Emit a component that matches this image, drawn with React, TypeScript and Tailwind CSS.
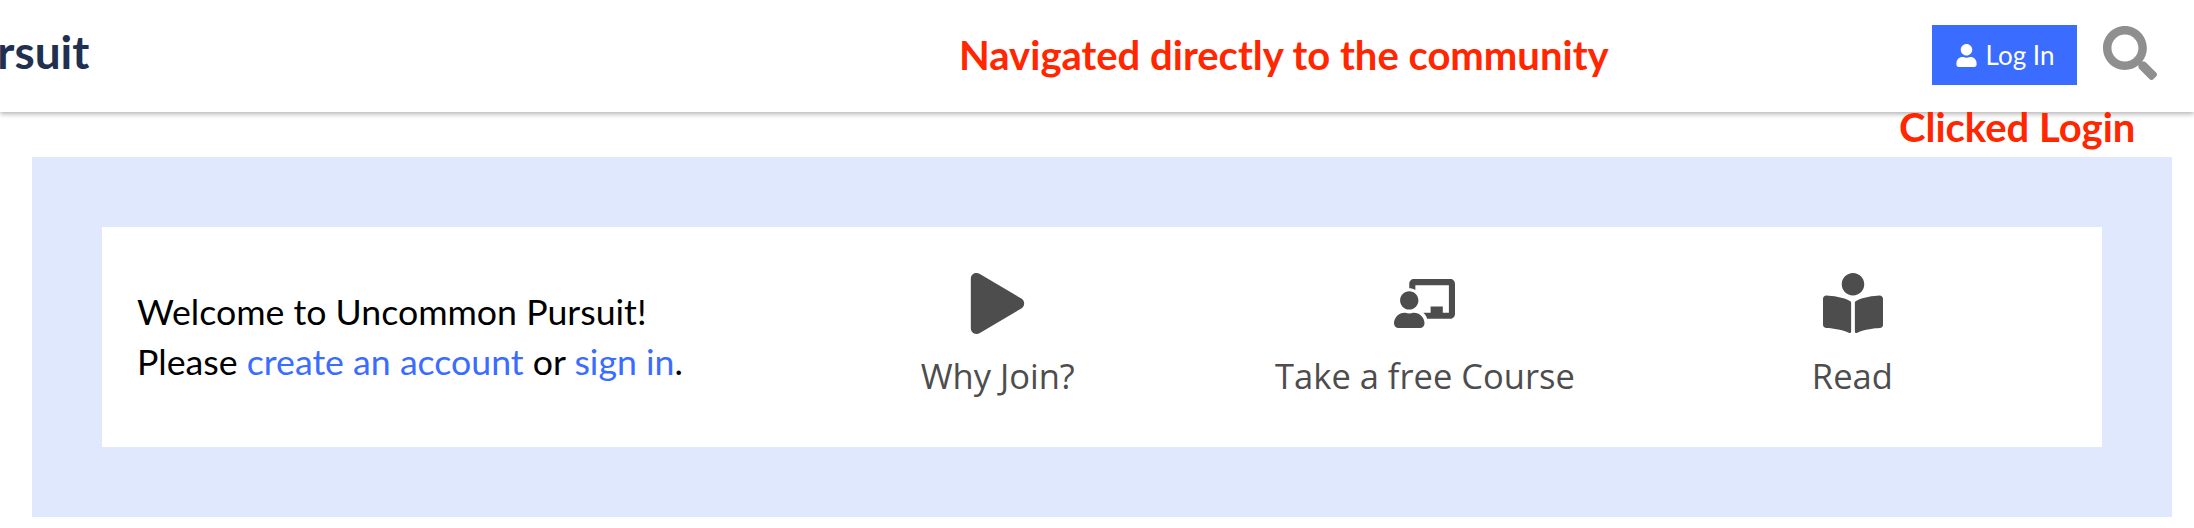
import { FaBookReader, FaChalkboardTeacher, FaPlay, FaSearch, FaUser } from "react-icons/fa";

function Action({ icon, label }: { icon: React.ReactNode; label: string }) {
  return (
    <div className="flex-1 flex flex-col items-center">
      <div className="h-[62px] mt-[-3px] flex items-center justify-center">{icon}</div>
      <div className="mt-[18px] text-[34.5px] leading-[47px] text-[#4d4d4d] font-['Open_Sans',sans-serif]">{label}</div>
    </div>
  );
}

export default function App() {
  return (
    <div className="relative w-[2194px] h-[528px] bg-white overflow-hidden font-['Lato',sans-serif]">
      <header className="relative h-[112px] flex items-center justify-between overflow-hidden shadow-[0_2px_5px_rgba(0,0,0,0.3)]">
        <div className="ml-[-57px] mt-[-8px] text-[46px] font-bold leading-none text-[#1f3050]">Pursuit</div>
        <div className="flex items-center mr-[37px]">
          <button className="w-[145px] h-[60px] mt-[-2px] bg-[#3a6cff] text-white flex items-center justify-center gap-[8px] text-[26px]">
            <FaUser size={23} />
            Log In
          </button>
          <FaSearch size={54} className="ml-[26px] mt-[-6px] text-[#8f8f8f]" />
        </div>
      </header>

      <div className="absolute left-[959px] top-[30px] text-[40px] leading-[50px] font-bold text-[#ff2600]">
        Navigated directly to the community
      </div>
      <div className="absolute left-[1899px] top-[102px] text-[40px] leading-[50px] font-bold text-[#ff2600]">
        Clicked Login
      </div>

      <main className="pt-[45px] pl-[32px] pr-[22px]">
        <section className="h-[360px] bg-[#e0e8fd] px-[70px] pt-[70px]">
          <div className="h-[220px] bg-white flex items-center px-[36px]">
            <div className="w-[647px] ml-[-1px] text-[35.7px] leading-[50px] text-black">
              <div>Welcome to Uncommon Pursuit!</div>
              <div>
                Please <a className="text-[#3a6cff]">create an account</a> or <a className="text-[#3a6cff]">sign in</a>.
              </div>
            </div>
            <Action icon={<FaPlay size={61} className="ml-[-1px] text-[#4d4d4d]" />} label="Why Join?" />
            <Action icon={<FaChalkboardTeacher size={61} className="text-[#4d4d4d]" />} label="Take a free Course" />
            <Action icon={<FaBookReader size={60} className="ml-[2px] text-[#4d4d4d]" />} label="Read" />
          </div>
        </section>
      </main>
    </div>
  );
}
